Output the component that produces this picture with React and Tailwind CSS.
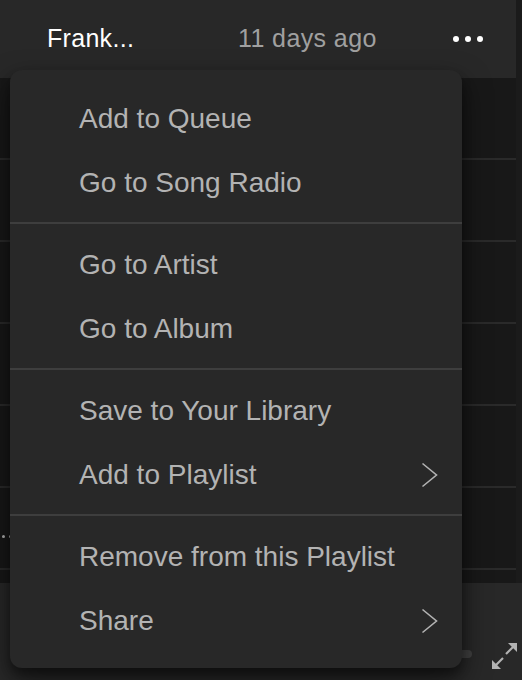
const sections = [
  [{ label: "Add to Queue" }, { label: "Go to Song Radio" }],
  [{ label: "Go to Artist" }, { label: "Go to Album" }],
  [{ label: "Save to Your Library" }, { label: "Add to Playlist", sub: true }],
  [{ label: "Remove from this Playlist" }, { label: "Share", sub: true }],
];

function Chevron() {
  return (
    <svg width="17" height="26" viewBox="0 0 17 26" fill="none">
      <polyline
        points="1.5,1.5 15.5,13 1.5,24.5"
        stroke="#b3b3b3"
        strokeWidth="1.6"
        strokeLinejoin="miter"
      />
    </svg>
  );
}

function ExpandIcon() {
  return (
    <svg width="27" height="28" viewBox="0 0 27 28" fill="none">
      <line x1="15" y1="12" x2="24" y2="3" stroke="#b3b3b3" strokeWidth="2.2" />
      <polygon points="26,1 26,10 17,1" fill="#b3b3b3" />
      <line x1="12" y1="16" x2="3" y2="25" stroke="#b3b3b3" strokeWidth="2.2" />
      <polygon points="1,27 1,18 10,27" fill="#b3b3b3" />
    </svg>
  );
}

function App() {
  return (
    <div
      className="relative w-[522px] h-[680px] overflow-hidden bg-[#1b1b1b] flex flex-col"
      style={{ fontFamily: '"Liberation Sans", Arial, sans-serif' }}
    >
      {/* Track row header */}
      <div className="h-[78px] w-[516px] bg-[#282828] flex items-center pl-[47px] pr-[33px] shrink-0">
        <div className="w-[191px] text-[25px] text-white tracking-[0.3px]">Frank...</div>
        <div className="flex-1 text-[25px] text-[#a0a0a0] tracking-[0.4px]">11 days ago</div>
        <div className="flex gap-[6px]">
          <span className="w-[6px] h-[6px] rounded-full bg-white" />
          <span className="w-[6px] h-[6px] rounded-full bg-white" />
          <span className="w-[6px] h-[6px] rounded-full bg-white" />
        </div>
      </div>

      {/* Tracklist behind menu */}
      <div className="flex-1 w-[516px] bg-[#181818] flex flex-col">
        {[0, 1, 2, 3, 4, 5].map((i) => (
          <div key={i} className="h-[82px] border-b-2 border-[#2a2a2a] shrink-0 flex items-center">
            {i === 5 && (
              <div className="flex gap-[4px] pl-[2px] pt-[16px]">
                <span className="w-[3px] h-[3px] rounded-full bg-[#b3b3b3]" />
                <span className="w-[3px] h-[3px] rounded-full bg-[#b3b3b3]" />
              </div>
            )}
          </div>
        ))}
      </div>

      {/* Player bar */}
      <div className="h-[97px] bg-[#282828] shrink-0 flex items-end pb-[10px] pr-[4px]">
        <div className="flex-1 flex items-center pl-[200px] pb-[12px]">
          <div className="flex-1 h-[8px] rounded-full bg-[#404040]" />
          <div className="w-[19px]" />
        </div>
        <ExpandIcon />
      </div>

      {/* Context menu */}
      <div className="absolute left-[10px] top-[70px] w-[452px] bg-[#282828] rounded-[12px] pt-2 pb-2 shadow-[0_12px_28px_rgba(0,0,0,0.55),0_6px_10px_rgba(0,0,0,0.3)]">
        {sections.map((items, s) => (
          <div
            key={s}
            className={s > 0 ? "border-t-2 border-[#3e3e3e] py-2" : "py-2"}
          >
            {items.map((item) => (
              <div
                key={item.label}
                className="h-16 flex items-center justify-between pl-[69px] pr-[24px] pt-[2px] text-[28px] text-[#b3b3b3]"
              >
                <span>{item.label}</span>
                {item.sub && <Chevron />}
              </div>
            ))}
          </div>
        ))}
      </div>
    </div>
  );
}

export default App;
